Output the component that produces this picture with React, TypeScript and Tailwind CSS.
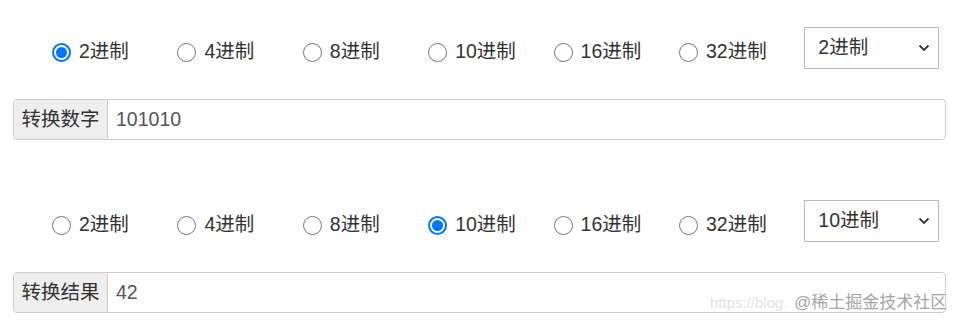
import React from 'react';

const bases = [2, 4, 8, 10, 16, 32];

function Radio({ checked, label }: { checked: boolean; label: string }) {
  return (
    <label className="flex items-center gap-[8px] h-[26px] mt-[8px]">
      {checked ? (
        <span className="w-[19px] h-[19px] rounded-full border-[2px] border-[#0075ff] flex items-center justify-center">
          <span className="w-[11px] h-[11px] rounded-full bg-[#0075ff]" />
        </span>
      ) : (
        <span className="w-[19px] h-[19px] rounded-full border border-[#767676] bg-white" />
      )}
      <span className="text-[19.5px] text-[#333]">{label}</span>
    </label>
  );
}

function Row({ selected, addon, value }: { selected: number; addon: string; value: string }) {
  return (
    <div>
      <div className="grid grid-cols-[repeat(6,125.4px)_135px] items-center pl-[52px] h-[42px]">
        {bases.map(b => (
          <Radio key={b} checked={b === selected} label={`${b}进制`} />
        ))}
        <div className="h-[42px] border border-[#bbb] flex items-center justify-between pl-[13px] pr-[8px] text-[19.5px] text-[#333]">
          <span className="-mt-[1px]">{selected}进制</span>
          <svg width="12" height="8" viewBox="0 0 12 8">
            <path d="M1.5 1.5 L6 6 L10.5 1.5" fill="none" stroke="#333" strokeWidth="1.8" />
          </svg>
        </div>
      </div>
      <div className="mt-[30px] ml-[13px] mr-[20px] flex h-[41px] border border-[#ccc] rounded-[4px]">
        <div className="w-[94px] bg-[#eee] border-r border-[#ccc] rounded-l-[4px] flex items-center justify-center text-[19.5px] text-[#333]">
          {addon}
        </div>
        <div className="flex-1 flex items-center pl-[8px] text-[19.5px] text-[#555]">{value}</div>
      </div>
    </div>
  );
}

export default function App() {
  return (
    <div
      className="relative w-[966px] h-[330px] bg-white overflow-hidden pt-[27px]"
      style={{ fontFamily: '"Liberation Sans", "Noto Sans CJK SC", sans-serif' }}
    >
      <Row selected={2} addon="转换数字" value="101010" />
      <div className="mt-[60px]">
        <Row selected={10} addon="转换结果" value="42" />
      </div>
      <div className="absolute left-[710px] top-[290px] flex items-end whitespace-nowrap">
        <span className="text-[15px] text-[#e4e4e4] w-[84px] mb-[1px]">https://blog.</span>
        <span
          className="text-[17px] text-[#a6a6a6]"
          style={{ textShadow: '0 0 2px #fff, 0 0 2px #fff' }}
        >
          @稀土掘金技术社区
        </span>
      </div>
    </div>
  );
}
